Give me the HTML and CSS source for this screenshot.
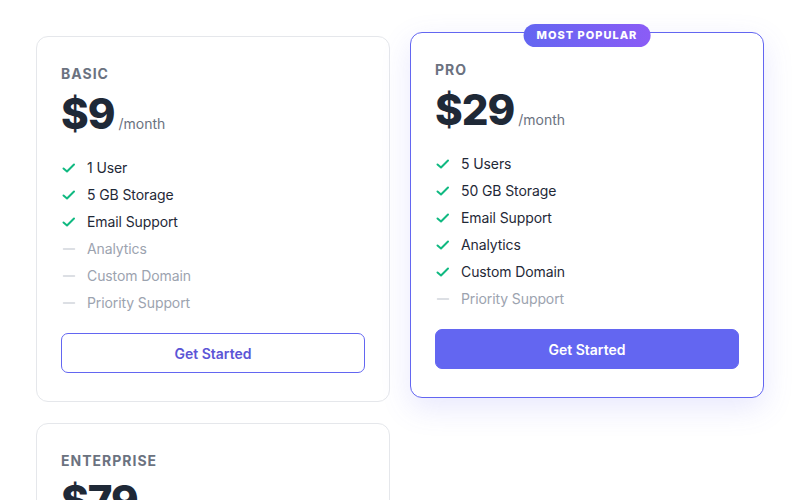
FILE: index.html
```html
<!DOCTYPE html>
<html lang="en">
<head>
<meta charset="utf-8">
<title>Pricing</title>
<link rel="stylesheet" href="styles.css">
</head>
<body>
<div class="grid">
  <div class="card">
    <div class="plan">BASIC</div>
    <div class="price"><span class="amount">$9</span><span class="per">/month</span></div>
    <ul class="features">
      <li class="on"><svg class="ic" viewBox="0 0 16 16"><polyline points="2.5,8.5 6,11.5 13,4.5"/></svg>1 User</li>
      <li class="on"><svg class="ic" viewBox="0 0 16 16"><polyline points="2.5,8.5 6,11.5 13,4.5"/></svg>5 GB Storage</li>
      <li class="on"><svg class="ic" viewBox="0 0 16 16"><polyline points="2.5,8.5 6,11.5 13,4.5"/></svg>Email Support</li>
      <li class="off"><svg class="ic" viewBox="0 0 16 16"><line x1="2.5" y1="8" x2="13.5" y2="8"/></svg>Analytics</li>
      <li class="off"><svg class="ic" viewBox="0 0 16 16"><line x1="2.5" y1="8" x2="13.5" y2="8"/></svg>Custom Domain</li>
      <li class="off"><svg class="ic" viewBox="0 0 16 16"><line x1="2.5" y1="8" x2="13.5" y2="8"/></svg>Priority Support</li>
    </ul>
    <button class="btn btn-outline">Get Started</button>
  </div>
  <div class="card card-pro">
    <span class="badge">MOST POPULAR</span>
    <div class="plan">PRO</div>
    <div class="price"><span class="amount">$29</span><span class="per">/month</span></div>
    <ul class="features">
      <li class="on"><svg class="ic" viewBox="0 0 16 16"><polyline points="2.5,8.5 6,11.5 13,4.5"/></svg>5 Users</li>
      <li class="on"><svg class="ic" viewBox="0 0 16 16"><polyline points="2.5,8.5 6,11.5 13,4.5"/></svg>50 GB Storage</li>
      <li class="on"><svg class="ic" viewBox="0 0 16 16"><polyline points="2.5,8.5 6,11.5 13,4.5"/></svg>Email Support</li>
      <li class="on"><svg class="ic" viewBox="0 0 16 16"><polyline points="2.5,8.5 6,11.5 13,4.5"/></svg>Analytics</li>
      <li class="on"><svg class="ic" viewBox="0 0 16 16"><polyline points="2.5,8.5 6,11.5 13,4.5"/></svg>Custom Domain</li>
      <li class="off"><svg class="ic" viewBox="0 0 16 16"><line x1="2.5" y1="8" x2="13.5" y2="8"/></svg>Priority Support</li>
    </ul>
    <button class="btn btn-solid">Get Started</button>
  </div>
  <div class="card">
    <div class="plan">ENTERPRISE</div>
    <div class="price"><span class="amount">$79</span><span class="per">/month</span></div>
    <ul class="features">
      <li class="on"><svg class="ic" viewBox="0 0 16 16"><polyline points="2.5,8.5 6,11.5 13,4.5"/></svg>Unlimited Users</li>
      <li class="on"><svg class="ic" viewBox="0 0 16 16"><polyline points="2.5,8.5 6,11.5 13,4.5"/></svg>500 GB Storage</li>
      <li class="on"><svg class="ic" viewBox="0 0 16 16"><polyline points="2.5,8.5 6,11.5 13,4.5"/></svg>Email Support</li>
      <li class="on"><svg class="ic" viewBox="0 0 16 16"><polyline points="2.5,8.5 6,11.5 13,4.5"/></svg>Analytics</li>
      <li class="on"><svg class="ic" viewBox="0 0 16 16"><polyline points="2.5,8.5 6,11.5 13,4.5"/></svg>Custom Domain</li>
      <li class="on"><svg class="ic" viewBox="0 0 16 16"><polyline points="2.5,8.5 6,11.5 13,4.5"/></svg>Priority Support</li>
    </ul>
    <button class="btn btn-outline">Get Started</button>
  </div>
</div>
</body>
</html>
```
FILE: styles.css
```css
* { box-sizing: border-box; }
html, body { margin: 0; background: #ffffff; }
body {
  font-family: Inter, "Noto Sans", sans-serif;
  color: #111827;
  padding: 36px;
}
.grid {
  display: grid;
  grid-template-columns: 1fr 1fr;
  gap: 21px 20px;
  align-items: start;
}
.card {
  position: relative;
  background: #fff;
  border: 1px solid #e5e7eb;
  border-radius: 12px;
  padding: 28px 24px;
  display: flex;
  flex-direction: column;
}
.card-pro {
  border-color: #6366f1;
  transform: translateY(-4px);
  box-shadow: 0 10px 30px rgba(99, 102, 241, 0.15);
}
.badge {
  position: absolute;
  top: -9px;
  left: 50%;
  transform: translateX(-50%);
  background: linear-gradient(90deg, #6366f1, #8b5cf6);
  color: #fff;
  font-size: 11px;
  font-weight: 800;
  letter-spacing: 1px;
  line-height: 23px;
  height: 23px;
  padding: 0 13px;
  border-radius: 999px;
  white-space: nowrap;
}
.plan {
  font-size: 14px;
  font-weight: 700;
  letter-spacing: 1px;
  color: #6b7280;
}
.price {
  margin-top: 8px;
  display: flex;
  align-items: baseline;
  gap: 4px;
}
.amount {
  font-size: 42px;
  font-weight: 800;
  line-height: 48px;
  color: #1f2937;
  letter-spacing: -1px;
}
.per {
  font-size: 14px;
  color: #6b7280;
}
.features {
  list-style: none;
  margin: 20px 0 0;
  padding: 0;
  display: flex;
  flex-direction: column;
  gap: 7px;
}
.features li {
  display: flex;
  align-items: center;
  gap: 10px;
  font-size: 14px;
  line-height: 20px;
  letter-spacing: -0.1px;
}
.ic {
  width: 16px;
  height: 16px;
  fill: none;
  stroke-width: 2;
  stroke-linecap: round;
  stroke-linejoin: round;
  flex: none;
}
.on { color: #1f2937; }
.on .ic { stroke: #10b981; }
.off { color: #9ca3af; }
.off .ic { stroke: #d1d5db; stroke-width: 1.5; }
.btn {
  margin-top: 20px;
  height: 40px;
  border-radius: 7px;
  font-family: inherit;
  font-size: 14px;
  font-weight: 600;
  cursor: pointer;
}
.btn-outline {
  background: #fff;
  border: 1px solid #6366f1;
  color: #5b55d6;
}
.btn-solid {
  background: #6366f1;
  border: 1px solid #6366f1;
  color: #fff;
}
```
